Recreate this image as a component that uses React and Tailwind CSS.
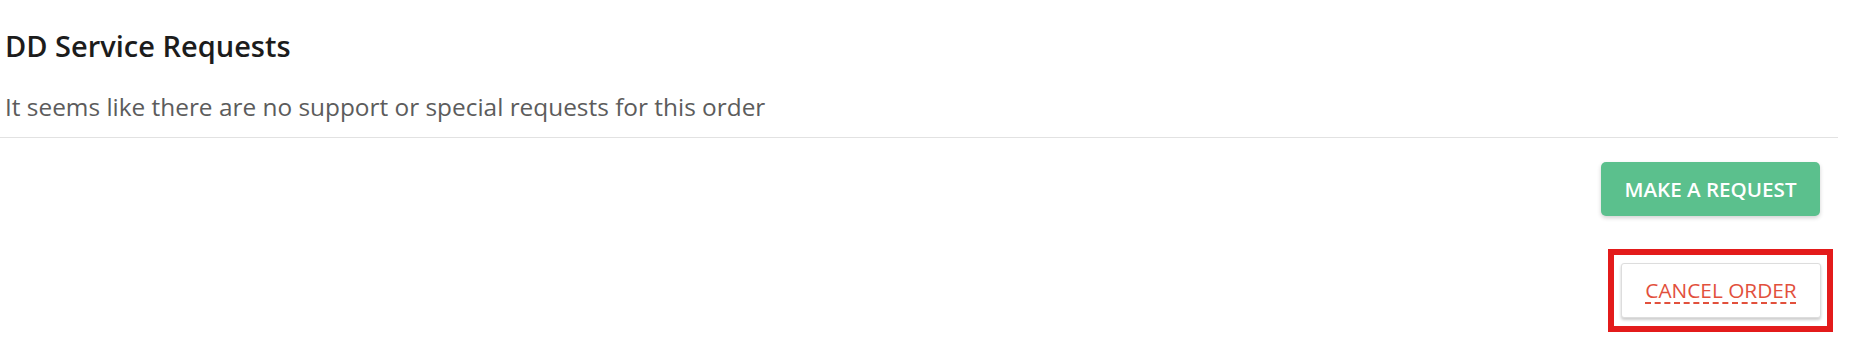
import React from "react";

function App() {
  return (
    <div className="w-full h-[339px] bg-white overflow-hidden" style={{ fontFamily: '"Open Sans", "Noto Sans", sans-serif' }}>
      <div className="w-[1838px]">
        {/* Header */}
        <div className="pl-[5px] pt-[26px] pb-[14px] border-b border-[#e2e2e2]">
          <h2 className="text-[29px] leading-[40px] font-semibold text-[#1c1c1c]">DD Service Requests</h2>
          <p className="mt-[25px] text-[24.4px] leading-[32px] text-[#5c5c5c]">
            It seems like there are no support or special requests for this order
          </p>
        </div>

        {/* Actions */}
        <div className="flex flex-col items-end pr-[18px] pt-[24px]">
          <button className="w-[219px] h-[54px] rounded-[5px] bg-[#5bc08d] text-white text-[20.6px] font-semibold shadow-[0_2px_4px_rgba(0,0,0,0.18)]">
            MAKE A REQUEST
          </button>
          <div className="mt-[33px] -mr-[13px] border-[6px] border-[#e31b1b] pl-[7px] pr-[6px] py-[8px]">
            <button className="w-[200px] h-[55px] rounded-[3px] bg-white border border-[#dddddd] shadow-[0_2px_3px_rgba(0,0,0,0.2)] text-[20.8px] text-[#e2503c] underline decoration-dashed decoration-[#e2503c] underline-offset-[5px]">
              CANCEL ORDER
            </button>
          </div>
        </div>
      </div>
    </div>
  );
}

export default App;
